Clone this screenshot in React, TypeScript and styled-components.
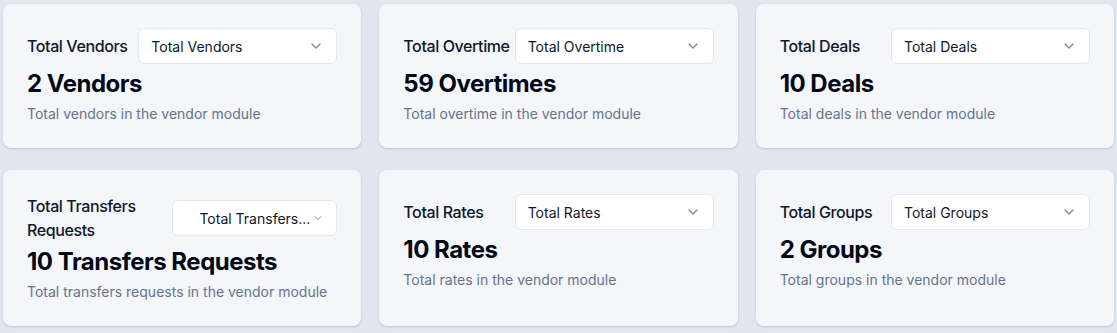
import styled, { createGlobalStyle } from "styled-components";
import { ChevronDown } from "lucide-react";

const GlobalStyle = createGlobalStyle`
    body {
        margin: 0;
        background: #e2e7ef;
        font-family: Inter, "Noto Sans", sans-serif;
        color: #0f172a;
    }
`;

type Stat = {
    label: string;
    option: string;
    value: string;
    description: string;
    compact?: boolean;
};

const stats: Stat[] = [
    {
        label: "Total Vendors",
        option: "Total Vendors",
        value: "2 Vendors",
        description: "Total vendors in the vendor module",
    },
    {
        label: "Total Overtime",
        option: "Total Overtime",
        value: "59 Overtimes",
        description: "Total overtime in the vendor module",
    },
    {
        label: "Total Deals",
        option: "Total Deals",
        value: "10 Deals",
        description: "Total deals in the vendor module",
    },
    {
        label: "Total Transfers Requests",
        option: "Total Transfers...",
        value: "10 Transfers Requests",
        description: "Total transfers requests in the vendor module",
        compact: true,
    },
    {
        label: "Total Rates",
        option: "Total Rates",
        value: "10 Rates",
        description: "Total rates in the vendor module",
    },
    {
        label: "Total Groups",
        option: "Total Groups",
        value: "2 Groups",
        description: "Total groups in the vendor module",
    },
];

function StatCard({ stat }: { stat: Stat }) {
    return (
        <Card>
            <Header>
                <Label>{stat.label}</Label>
                <SelectTrigger type="button">
                    <SelectValue $end={stat.compact}>{stat.option}</SelectValue>
                    <ChevronDown size={stat.compact ? 12 : 16} />
                </SelectTrigger>
            </Header>
            <Value>{stat.value}</Value>
            <Description>{stat.description}</Description>
        </Card>
    );
}

function App() {
    return (
        <>
            <GlobalStyle />
            <Grid>
                {stats.map((s) => (
                    <StatCard key={s.label} stat={s} />
                ))}
            </Grid>
        </>
    );
}

const Grid = styled.div`
    display: grid;
    grid-template-columns: repeat(3, 1fr);
    column-gap: 18px;
    row-gap: 22px;
    padding: 4px 3px;
`;

const Card = styled.div`
    background: #f4f6fa;
    border-radius: 8px;
    padding: 24px;
    box-shadow: 0 1px 3px rgba(15, 23, 42, 0.12), 0 1px 2px rgba(15, 23, 42, 0.06);
`;

const Header = styled.div`
    display: flex;
    align-items: center;
    justify-content: space-between;
`;

const Label = styled.span`
    font-size: 16px;
    line-height: 24px;
    font-weight: 500;
    letter-spacing: -0.4px;
    color: #0f172a;
`;

const SelectTrigger = styled.button`
    display: flex;
    align-items: center;
    justify-content: space-between;
    gap: 2px;
    width: 199px;
    height: 36px;
    padding: 0 12px;
    background: #ffffff;
    border: 1px solid #e2e8f0;
    border-radius: 6px;
    font-family: inherit;
    font-size: 14px;
    color: #0f172a;

    svg {
        flex-shrink: 0;
        color: #0f172a;
        opacity: 0.5;
    }
`;

const SelectValue = styled.span<{ $end?: boolean }>`
    flex: 1;
    text-align: ${(p) => (p.$end ? "right" : "left")};
    white-space: nowrap;
    overflow: hidden;
`;

const Value = styled.div`
    margin-top: 4px;
    font-size: 24px;
    line-height: 32px;
    font-weight: 700;
    letter-spacing: -0.5px;
    color: #020817;
`;

const Description = styled.p`
    margin: 4px 0 0;
    font-size: 14px;
    line-height: 20px;
    color: #64748b;
`;

export default App;
